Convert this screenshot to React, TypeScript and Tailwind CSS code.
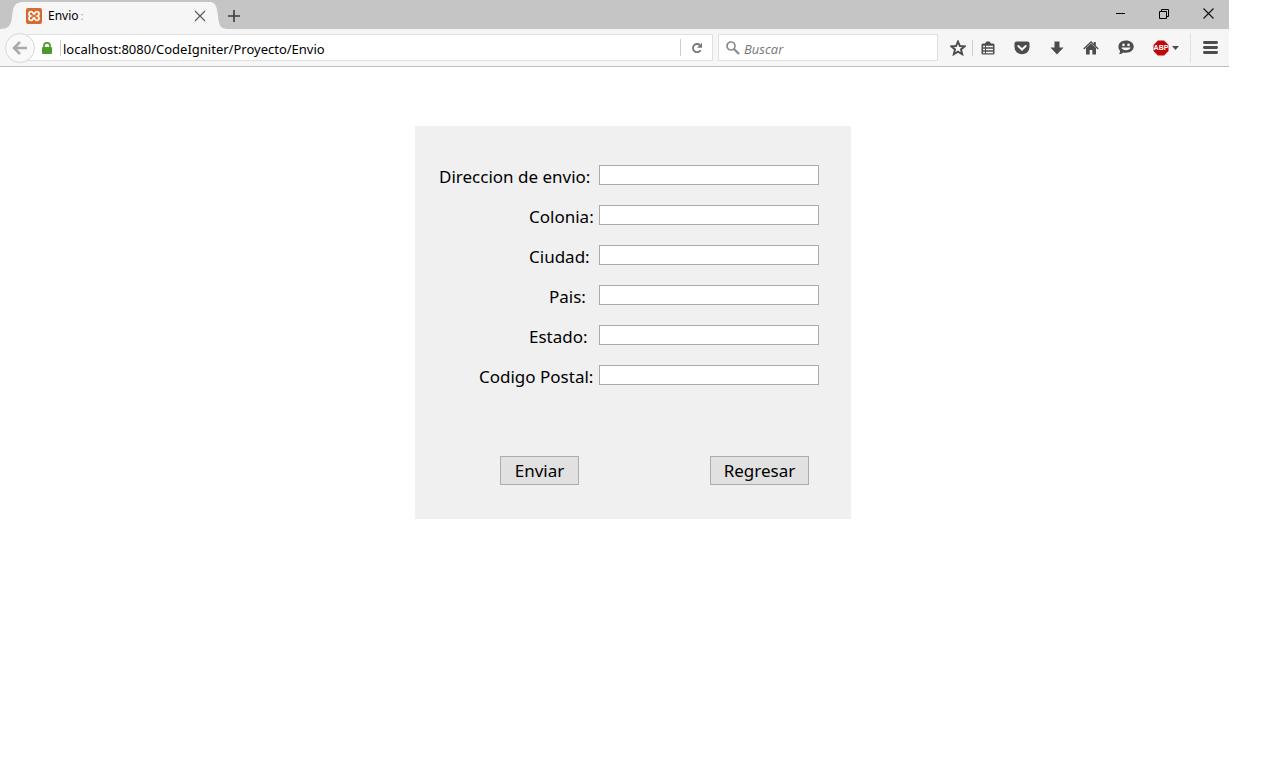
import React from "react";

const fields = [
  { id: "direccion", label: "Direccion de envio:", indent: "" },
  { id: "colonia", label: "Colonia:", indent: "pl-[90px]" },
  { id: "ciudad", label: "Ciudad:", indent: "pl-[90px]" },
  { id: "pais", label: "Pais:", indent: "pl-[110px]" },
  { id: "estado", label: "Estado:", indent: "pl-[90px]" },
  { id: "codigo", label: "Codigo Postal:", indent: "pl-[40px]" },
];

function IconButton({ label, className = "", children }: { label: string; className?: string; children: React.ReactNode }) {
  return (
    <button type="button" aria-label={label} className={`flex shrink-0 items-center justify-center ${className}`}>
      {children}
    </button>
  );
}

function TabStrip() {
  return (
    <div className="flex h-[29px] bg-[#c5c5c5]">
      <div className="flex pt-[2px]">
        <svg width="24" height="27" viewBox="0 0 24 27" aria-hidden="true">
          <path d="M0 27C9 27 11 23 12 15C13 5 14 0 24 0V27Z" fill="#f6f6f6" />
        </svg>
        <div className="flex w-[186px] items-center bg-[#f6f6f6] pl-[2px]">
          <svg width="16" height="16" viewBox="0 0 16 16" aria-hidden="true">
            <rect width="16" height="16" rx="2" fill="#d9692c" />
            <path
              d="M5.2 3.6C2.4 3.6 2.4 7.2 4.6 8C2.4 8.8 2.4 12.4 5.2 12.4C7.2 12.4 7 10 8 10C9 10 8.8 12.4 10.8 12.4C13.6 12.4 13.6 8.8 11.4 8C13.6 7.2 13.6 3.6 10.8 3.6C8.8 3.6 9 6 8 6C7 6 7.2 3.6 5.2 3.6Z"
              fill="none"
              stroke="#fff"
              strokeWidth="1.8"
            />
          </svg>
          <span className="ml-1.5 text-[12px] leading-4 text-black">
            Envio <span className="-ml-px text-[10px] text-[#999]">:</span>
          </span>
          <IconButton label="Cerrar pestaña" className="mr-[2px] ml-auto size-4">
            <svg width="12" height="12" viewBox="0 0 12 12" stroke="#555" strokeWidth="1.1">
              <path d="M1 1L11 11M11 1L1 11" />
            </svg>
          </IconButton>
        </div>
        <svg width="18" height="27" viewBox="0 0 18 27" aria-hidden="true">
          <path d="M0 0C6 0 7 6 8 14C9 23 10 27 18 27H0Z" fill="#f6f6f6" />
        </svg>
      </div>
      <IconButton label="Nueva pestaña" className="h-[29px] w-[12px] pt-[2px]">
        <svg width="12" height="12" viewBox="0 0 12 12" stroke="#3c3c3c" strokeWidth="1.6">
          <path d="M6 0V12M0 6H12" />
        </svg>
      </IconButton>
      <div className="ml-auto flex h-[27px] pr-[13px]">
        <IconButton label="Minimizar" className="w-[44px]">
          <svg width="10" height="10" viewBox="0 0 10 10">
            <path d="M1 4.5H10" stroke="#000" />
          </svg>
        </IconButton>
        <IconButton label="Restaurar" className="w-[44px]">
          <svg width="10" height="10" viewBox="0 0 10 10" fill="none" stroke="#000">
            <path d="M.5 2.5H7.5V9.5H.5ZM2.5 2.5V.5H9.5V7.5H7.5" />
          </svg>
        </IconButton>
        <IconButton label="Cerrar" className="ml-[15px] w-[15px]">
          <svg width="11" height="11" viewBox="0 0 11 11" stroke="#111" strokeWidth="1.1">
            <path d="M.5 .5L10.5 10.5M10.5 .5L.5 10.5" />
          </svg>
        </IconButton>
      </div>
    </div>
  );
}

function Toolbar() {
  return (
    <div className="flex h-[38px] items-center border-b border-[#bdbdbd] bg-[#f6f6f6] pl-[5px]">
      <IconButton label="Atrás" className="z-10 size-[30px] rounded-full border border-[#d8d8d8] bg-[#f9f9f9]">
        <svg width="16" height="14" viewBox="0 0 16 14" fill="none" stroke="#aaa" strokeWidth="2.6">
          <path d="M8 1L2 7L8 13M2 7H15" />
        </svg>
      </IconButton>
      <div className="-ml-2 flex h-[27px] min-w-0 flex-1 items-center border border-[#e0e0e0] bg-white pl-[14px]">
        <svg width="10" height="12" viewBox="0 0 10 12" aria-hidden="true">
          <path d="M2 6V3.5C2 0 8 0 8 3.5V6" fill="none" stroke="#4a9a2c" strokeWidth="1.7" />
          <rect y="5" width="10" height="7" rx="1" fill="#4a9a2c" />
        </svg>
        <div className="ml-2 h-4 w-px bg-[#ccc]" />
        <input
          aria-label="Dirección web"
          defaultValue="localhost:8080/CodeIgniter/Proyecto/Envio"
          className="h-[25px] min-w-0 flex-1 bg-transparent pt-[2px] pl-[2px] text-[13px] leading-5 text-black outline-none"
        />
        <IconButton label="Recargar" className="h-[17px] w-[32px] border-l border-[#ccc]">
          <svg width="12" height="12" viewBox="0 0 12 12">
            <path d="M9.6 8.2A4.1 4.1 0 1 1 8.8 3" fill="none" stroke="#777" strokeWidth="1.8" />
            <path d="M11 .8V5.8H6Z" fill="#777" />
          </svg>
        </IconButton>
      </div>
      <label className="ml-[5px] flex h-[27px] w-[220px] items-center border border-[#e0e0e0] bg-white pl-[7px]">
        <svg width="14" height="14" viewBox="0 0 14 14" fill="none" stroke="#8c8c8c" aria-hidden="true">
          <circle cx="5" cy="5" r="4" strokeWidth="1.7" />
          <path d="M8 8L13 13" strokeWidth="2.3" />
        </svg>
        <input
          aria-label="Buscar"
          placeholder="Buscar"
          className="ml-[4px] h-[25px] min-w-0 flex-1 bg-transparent pt-[2px] font-['Open_Sans','Noto_Sans',sans-serif] text-[13px] leading-5 italic outline-none placeholder:text-[#777]"
        />
      </label>
      <IconButton label="Marcar esta página" className="ml-[3px] w-[34px]">
        <svg width="16" height="16" viewBox="0 0 16 16" fill="none" stroke="#4c4c4c" strokeWidth="1.9">
          <path d="M8 1.5L9.9 6L14.7 6.3L11 9.4L12.2 14.2L8 11.6L3.8 14.2L5 9.4L1.3 6.3L6.1 6Z" />
        </svg>
      </IconButton>
      <IconButton label="Marcadores" className="-ml-[3px] h-4 w-[31px] border-l border-[#d0d0d0]">
        <svg width="14" height="14" viewBox="0 0 14 14">
          <path d="M2 2.5H4L5.5 .5H8.5L10 2.5H12Q13.5 2.5 13.5 4V12Q13.5 13.5 12 13.5H2Q.5 13.5 .5 12V4Q.5 2.5 2 2.5Z" fill="#4c4c4c" />
          <path d="M2 5.5H4M5 5.5H12M2 8.5H4M5 8.5H12M2 11.5H4M5 11.5H12" stroke="#f6f6f6" strokeWidth="1.3" />
        </svg>
      </IconButton>
      <IconButton label="Pocket" className="ml-[2px] w-[34px]">
        <svg width="16" height="14" viewBox="0 0 16 14">
          <path d="M2.5 .5H13.5Q15.5 .5 15.5 2.5V6A7.5 7.3 0 0 1 .5 6V2.5Q.5 .5 2.5 .5Z" fill="#4c4c4c" />
          <path d="M4.3 5L8 8.5L11.7 5" fill="none" stroke="#f6f6f6" strokeWidth="2" strokeLinecap="round" />
        </svg>
      </IconButton>
      <IconButton label="Descargas" className="w-[35px]">
        <svg width="14" height="14" viewBox="0 0 14 14">
          <path d="M4.5 .5H9.5V6.5H13.5L7 13.5L.5 6.5H4.5Z" fill="#4c4c4c" />
        </svg>
      </IconButton>
      <IconButton label="Inicio" className="w-[34px]">
        <svg width="16" height="14" viewBox="0 0 16 14" fill="#4c4c4c">
          <path d="M8 0L10.8 2.8V1H12.8V4.8L15.7 7.6L14.8 8.4L8 2.1L1.2 8.4L.3 7.6Z" />
          <path d="M8 2.4L13 7V13.5H9.3V9H6.7V13.5H3V7Z" />
        </svg>
      </IconButton>
      <IconButton label="Hello" className="w-[35px]">
        <svg width="16" height="15" viewBox="0 0 16 15">
          <path d="M8 .5C12.5 .5 15.7 3 15.7 6.6S12.5 12.8 8 12.8C7 12.8 6 12.7 5.2 12.4C4.2 13.6 2.5 14.2 .8 14.1C1.7 13.2 2.1 12.1 2.1 10.7C-.8 8.2-.4 .5 8 .5Z" fill="#4c4c4c" />
          <circle cx="5.5" cy="4.9" r="1.3" fill="#f6f6f6" />
          <circle cx="10.5" cy="4.9" r="1.3" fill="#f6f6f6" />
          <path d="M3.3 7.6H12.7C11.5 11.2 4.5 11.2 3.3 7.6Z" fill="#f6f6f6" />
        </svg>
      </IconButton>
      <IconButton label="Adblock Plus" className="ml-[10px] gap-[3px]">
        <span className="relative flex size-4 items-center justify-center">
          <svg width="16" height="16" viewBox="0 0 16 16" className="absolute inset-0">
            <path d="M4.9 .5H11.1L15.5 4.9V11.1L11.1 15.5H4.9L.5 11.1V4.9Z" fill="#c1060b" />
          </svg>
          <span className="relative font-['Liberation_Sans',sans-serif] text-[7px] leading-none font-bold text-white">ABP</span>
        </span>
        <svg width="7" height="4" viewBox="0 0 7 4">
          <path d="M0 0H7L3.5 4Z" fill="#4c4c4c" />
        </svg>
      </IconButton>
      <div className="ml-[11px] h-[30px] w-px bg-[#e0e0e0]" />
      <IconButton label="Abrir menú" className="w-[38px]">
        <svg width="15" height="13" viewBox="0 0 15 13" stroke="#4c4c4c" strokeWidth="2.8" strokeLinecap="round">
          <path d="M1.4 1.5H13.6M1.4 6.5H13.6M1.4 11.5H13.6" />
        </svg>
      </IconButton>
    </div>
  );
}

export default function App() {
  return (
    <div className="min-h-screen bg-white font-['Noto_Sans','Open_Sans',sans-serif]">
      <header className="mr-[49px]">
        <TabStrip />
        <Toolbar />
      </header>
      <main className="pt-[59px] pr-3">
        <form
          onSubmit={(e) => e.preventDefault()}
          className="mx-auto w-[436px] bg-[#f0f0f0] px-6 pt-[39px] pb-[34px] text-[17px] leading-6 text-black"
        >
          <div className="flex flex-col gap-5">
            {fields.map((f) => (
              <div key={f.id} className="flex h-5 items-start">
                <label htmlFor={f.id} className={`w-[160px] shrink-0 whitespace-nowrap ${f.indent}`}>
                  {f.label}
                </label>
                <input id={f.id} name={f.id} type="text" className="h-5 w-[220px] border border-[#ababab] bg-white px-1 text-sm outline-none" />
              </div>
            ))}
          </div>
          <div className="mt-[71px] flex justify-between pr-[18px] pl-[61px]">
            <button type="submit" className="h-[29px] w-[79px] border border-[#adadad] bg-[#e1e1e1]">
              Enviar
            </button>
            <button type="button" className="h-[29px] w-[99px] border border-[#adadad] bg-[#e1e1e1]">
              Regresar
            </button>
          </div>
        </form>
      </main>
    </div>
  );
}
